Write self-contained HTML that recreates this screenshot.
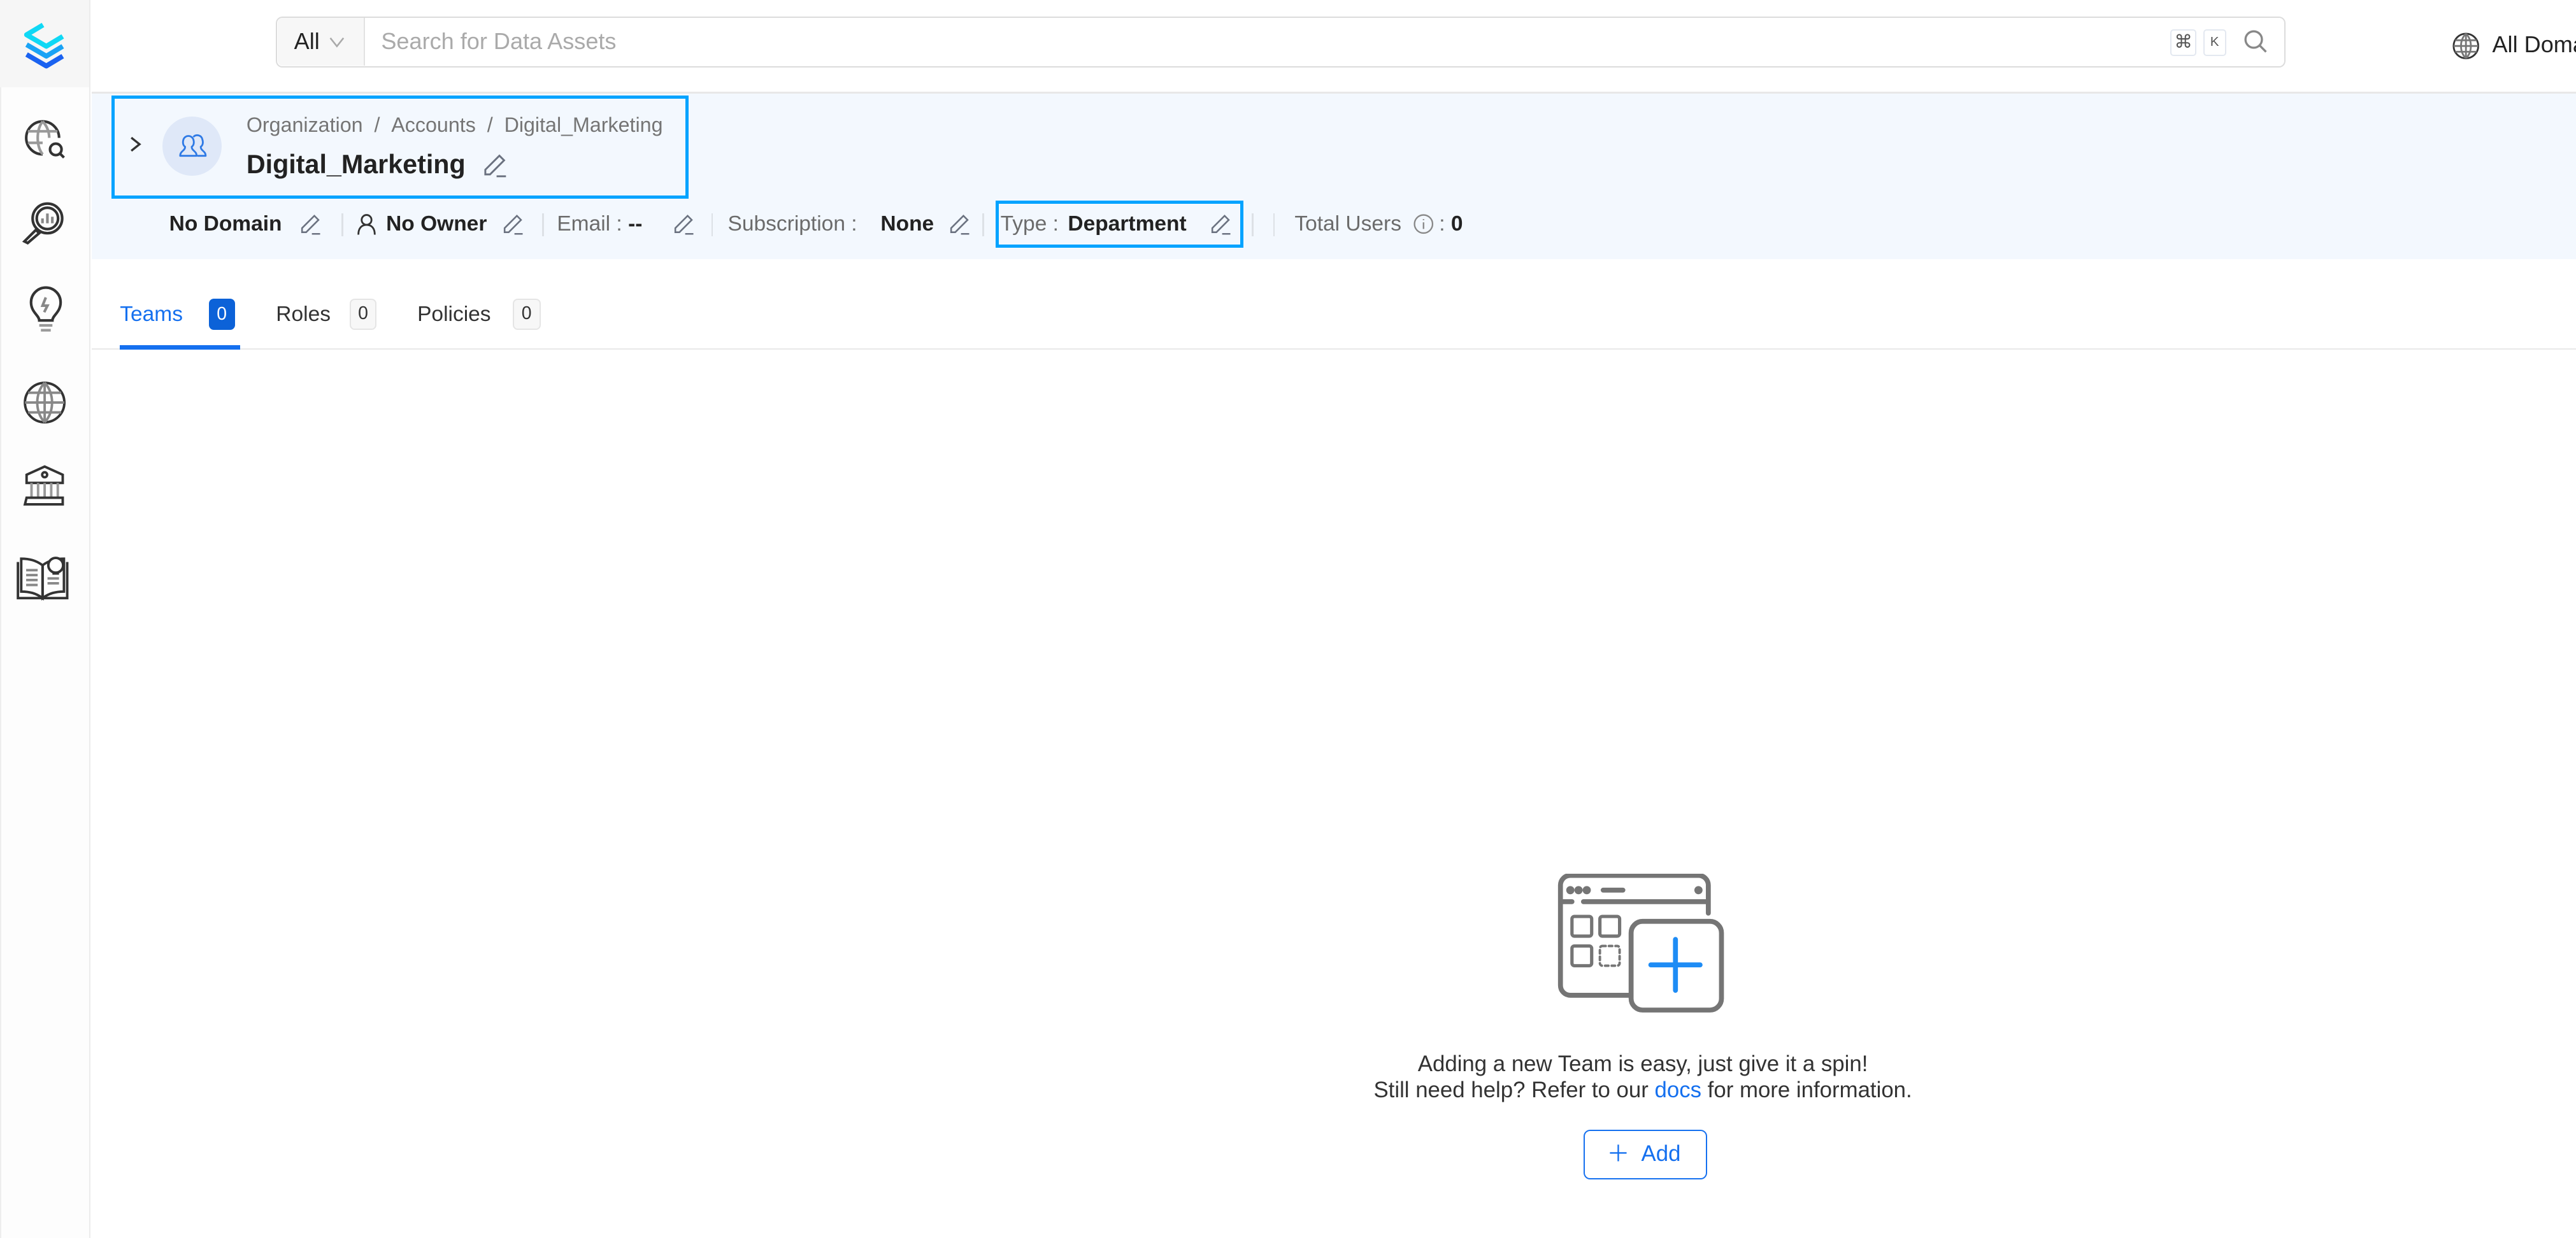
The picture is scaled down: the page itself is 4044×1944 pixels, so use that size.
<!DOCTYPE html>
<html><head><meta charset="utf-8"><style>
*{margin:0;padding:0;box-sizing:border-box}
html,body{width:4044px;height:1944px;overflow:hidden;background:#fff}
#r{zoom:2.5791;width:1568px;height:754px;position:relative;font-family:"Liberation Sans",sans-serif;color:#292929}
.a{position:absolute;white-space:nowrap}
.pen{position:absolute;width:14px;height:14px}
.sep{position:absolute;width:1px;height:14px;background:#dde1e6;top:130px}
.lbl{color:#6b6b6b}
.b{color:#222;font-weight:bold}
</style></head><body><div id="r">
<!-- sidebar -->
<div class="a" style="left:0;top:0;width:55px;height:754px;background:#fdfdfd;border-right:1px solid #ececec;border-left:1px solid #eee"></div>
<div class="a" style="left:0;top:0;width:55px;height:53px;background:#f6f6f6;border-right:1px solid #ececec"></div>
<svg class="a" style="left:13px;top:13px" width="30" height="30" viewBox="0 0 30 30" fill="none" stroke-width="3" stroke-linejoin="round">
<path d="M13 2 L3 8 L15 15 L25 9" stroke="#10d8f5"/>
<path d="M3 14 L15 21 L25 15" stroke="#1aa3f5"/>
<path d="M3 20 L15 27 L25 21" stroke="#1a62f0"/>
</svg>
<svg class="a" style="left:14px;top:71px" width="28" height="28" viewBox="0 0 28 28" fill="none" stroke="#333" stroke-width="1.6">
<path d="M22 13 A10 10 0 1 0 12 23"/><path d="M3 9h18M3 16h9M12 3c-4 5-4 15 0 20M12 3c3 3 4 7 4 10" stroke="#999"/>
<circle cx="20" cy="20" r="3.5"/><path d="M22.5 22.5l2.5 2.5"/></svg>
<svg class="a" style="left:11px;top:121px" width="30" height="30" viewBox="0 0 30 30" fill="none" stroke="#333" stroke-width="1.6">
<circle cx="18" cy="12" r="9"/><circle cx="18" cy="12" r="6.5"/><path d="M15 15v-3M18 15v-6M21 15v-4" stroke="#888"/><path d="M11 19l-7 7 2 1 7-6z"/></svg>
<svg class="a" style="left:16px;top:174px" width="24" height="30" viewBox="0 0 24 30" fill="none" stroke="#333" stroke-width="1.6">
<path d="M8 21c0-3-5-5-5-11a9 9 0 0 1 18 0c0 6-5 8-5 11z"/><path d="M12 7l-2 5h3l-2 4" stroke="#888"/><path d="M8 24h8M9 27h6" stroke="#999"/></svg>
<svg class="a" style="left:13px;top:231px" width="28" height="28" viewBox="0 0 28 28" fill="none" stroke="#333" stroke-width="1.5">
<circle cx="14" cy="14" r="12"/><path d="M2 14h24M4 8h20M4 20h20M14 2v24M14 2c-6 6-6 18 0 24M14 2c6 6 6 18 0 24" stroke="#888"/></svg>
<svg class="a" style="left:13px;top:283px" width="28" height="26" viewBox="0 0 28 26" fill="none" stroke="#333" stroke-width="1.5">
<path d="M3 11V6l11-5 11 5v5z"/><circle cx="14" cy="6" r="1.5"/><path d="M6 11v9M10 11v9M14 11v9M18 11v9M22 11v9" stroke="#999"/><path d="M3 20h22v4H2z"/></svg>
<svg class="a" style="left:9px;top:336px" width="34" height="30" viewBox="0 0 34 30" fill="none" stroke="#333" stroke-width="1.5">
<path d="M2 6v22h30V6"/><path d="M4 4c5 0 9 1 13 4v20c-4-3-8-4-13-4z"/><path d="M30 4c-5 0-9 1-13 4v20c4-3 8-4 13-4z"/>
<circle cx="25" cy="8" r="4.5" fill="#fff"/><path d="M23 13h4" /><path d="M7 11h7M7 14h7M7 17h7M7 20h7M20 16h7M20 19h7" stroke="#888"/></svg>

<!-- header -->
<div class="a" style="left:56px;top:56px;width:1512px;height:1px;background:#e8e8e8"></div>
<div class="a" style="left:168px;top:10px;width:1223px;height:31px;border:1px solid #dcdcdc;border-radius:4px"></div>
<div class="a" style="left:169px;top:11px;width:53px;height:29px;background:#f7f7f7;border-right:1px solid #e2e2e2;border-radius:3px 0 0 3px"></div>
<div class="a" style="left:179px;top:17px;font-size:14px;color:#222">All</div>
<svg class="a" style="left:200px;top:20px" width="10" height="10" viewBox="0 0 10 10" fill="none" stroke="#aaa"><path d="M1 3l4 5 4-5"/></svg>
<div class="a" style="left:232px;top:17px;font-size:14px;color:#aaa">Search for Data Assets</div>
<div class="a" style="left:1321px;top:18px;width:16px;height:16px;border:1px solid #e3e8f0;border-radius:2px;font-size:11px;color:#555;text-align:center;line-height:14px">⌘</div>
<div class="a" style="left:1341px;top:18px;width:14px;height:16px;border:1px solid #e3e8f0;border-radius:2px;font-size:8px;color:#555;text-align:center;line-height:14px">K</div>
<svg class="a" style="left:1365px;top:17px" width="16" height="16" viewBox="0 0 16 16" fill="none" stroke="#888" stroke-width="1.3"><circle cx="7" cy="7" r="5"/><path d="M10.5 10.5l4 4"/></svg>
<svg class="a" style="left:1492px;top:19px" width="18" height="18" viewBox="0 0 18 18" fill="none" stroke="#333" stroke-width="1.1"><circle cx="9" cy="9" r="7.5"/><path d="M1.5 9h15M2.5 5.5h13M2.5 12.5h13M9 1.5v15M9 1.5c-4 4-4 11 0 15M9 1.5c4 4 4 11 0 15" stroke="#777"/></svg>
<div class="a" style="left:1517px;top:19px;font-size:14px;color:#222">All Domains</div>

<!-- blue band -->
<div class="a" style="left:56px;top:57px;width:1512px;height:101px;background:#f3f8fe"></div>
<div class="a" style="left:68px;top:58px;width:351px;height:63px;border:2px solid #00a3ff"></div>
<svg class="a" style="left:78px;top:82px" width="10" height="12" viewBox="0 0 10 12" fill="none" stroke="#333" stroke-width="1.3"><path d="M2 2l5 4-5 4"/></svg>
<div class="a" style="left:99px;top:71px;width:36px;height:36px;border-radius:50%;background:#dfe8f8"></div>
<svg class="a" style="left:108px;top:80px" width="19" height="18" viewBox="0 0 19 18" fill="none" stroke="#2f7ae5" stroke-width="1.1" stroke-linejoin="round">
<path d="M1.5 15c0-3 3-3 3-5.5-1.5-1-1.5-3-1-4.5a3.2 3.2 0 0 1 6 0c0.5 1.5 0.5 3.5-1 4.5 0 2.5 3 2.5 3 5.5z"/>
<path d="M9.5 3.5a3.2 3.2 0 0 1 5.5 1.5c0.5 1.5 0.5 3.5-1 4.5 0 2.5 3 2.5 3 5.5h-5"/>
</svg>
<div class="a" style="left:150px;top:69px;font-size:12.5px;color:#757575">Organization&nbsp;&nbsp;/&nbsp;&nbsp;Accounts&nbsp;&nbsp;/&nbsp;&nbsp;Digital_Marketing</div>
<div class="a" style="left:150px;top:91px;font-size:16px;font-weight:bold;color:#222">Digital_Marketing</div>

<svg width="0" height="0" style="position:absolute"><defs><symbol id="pn" viewBox="0 0 14 14"><path d="M9.5 1.5l2.5 2.5-7.5 7.5H2v-2.5z" fill="none" stroke="#6b7280" stroke-width="1"/><path d="M8 12.5h5" stroke="#6b7280" stroke-width="1"/></symbol></defs></svg>
<svg class="pen" style="left:293px;top:93px;width:16px;height:16px"><use href="#pn"/></svg>

<div class="a b" style="left:103px;top:129px;font-size:13px">No Domain</div>
<svg class="pen" style="left:182px;top:130px"><use href="#pn"/></svg>
<div class="sep" style="left:208px"></div>
<svg class="a" style="left:217px;top:130px" width="12" height="14" viewBox="0 0 12 14" fill="none" stroke="#333" stroke-width="1.1"><circle cx="6" cy="4" r="3"/><path d="M1 13c0-4 2-6 5-6s5 2 5 6"/></svg>
<div class="a b" style="left:235px;top:129px;font-size:13px">No Owner</div>
<svg class="pen" style="left:305px;top:130px"><use href="#pn"/></svg>
<div class="sep" style="left:330px"></div>
<div class="a lbl" style="left:339px;top:129px;font-size:13px">Email : <b style="color:#222">--</b></div>
<svg class="pen" style="left:409px;top:130px"><use href="#pn"/></svg>
<div class="sep" style="left:433px"></div>
<div class="a lbl" style="left:443px;top:129px;font-size:13px">Subscription :</div>
<div class="a b" style="left:536px;top:129px;font-size:13px">None</div>
<svg class="pen" style="left:577px;top:130px"><use href="#pn"/></svg>
<div class="sep" style="left:598px"></div>
<div class="a" style="left:606px;top:122px;width:151px;height:29px;border:2px solid #00a3ff"></div>
<div class="a lbl" style="left:609px;top:129px;font-size:13px">Type :</div>
<div class="a b" style="left:650px;top:129px;font-size:13px">Department</div>
<svg class="pen" style="left:736px;top:130px"><use href="#pn"/></svg>
<div class="sep" style="left:762px"></div>
<div class="sep" style="left:775px"></div>
<div class="a lbl" style="left:788px;top:129px;font-size:13px">Total Users</div>
<svg class="a" style="left:860px;top:130px" width="13" height="13" viewBox="0 0 13 13" fill="none" stroke="#888" stroke-width="0.9"><circle cx="6.5" cy="6.5" r="5.5"/><path d="M6.5 5.5v4M6.5 3.5v0.6"/></svg>
<div class="a" style="left:876px;top:129px;font-size:13px;color:#6b6b6b">: <b style="color:#222">0</b></div>

<!-- tabs -->
<div class="a" style="left:73px;top:184px;font-size:13px;color:#1570ef">Teams</div>
<div class="a" style="left:127px;top:182px;width:16px;height:19px;background:#0c62d8;border-radius:3px;color:#fff;font-size:11px;text-align:center;line-height:19px">0</div>
<div class="a" style="left:168px;top:184px;font-size:13px;color:#333">Roles</div>
<div class="a" style="left:213px;top:182px;width:16px;height:19px;background:#f7f7f7;border:1px solid #e5e5e5;border-radius:3px;color:#333;font-size:11px;text-align:center;line-height:17px">0</div>
<div class="a" style="left:254px;top:184px;font-size:13px;color:#333">Policies</div>
<div class="a" style="left:312px;top:182px;width:17px;height:19px;background:#f7f7f7;border:1px solid #e5e5e5;border-radius:3px;color:#333;font-size:11px;text-align:center;line-height:17px">0</div>
<div class="a" style="left:56px;top:212px;width:1512px;height:1px;background:#e8e8e8"></div>
<div class="a" style="left:73px;top:210px;width:73px;height:3px;background:#1570ef"></div>

<!-- empty state -->
<svg class="a" style="left:947px;top:532px" width="104" height="86" viewBox="0 0 104 86" fill="none" stroke="#757575" stroke-width="3" stroke-linecap="round">
<path d="M46 74H9a6 6 0 0 1-6-6V7a6 6 0 0 1 6-6h78a6 6 0 0 1 6 6v17"/>
<path d="M4 17h6M17 17h75"/><path d="M29 10h12"/>
<circle cx="9" cy="10" r="1" fill="#757575"/><circle cx="14" cy="10" r="1" fill="#757575"/><circle cx="19" cy="10" r="1" fill="#757575"/><circle cx="87" cy="10" r="1" fill="#757575"/>
<rect x="10" y="26" width="12" height="12" rx="1.5" stroke-width="2"/><rect x="27" y="26" width="12" height="12" rx="1.5" stroke-width="2"/>
<rect x="10" y="44" width="12" height="12" rx="1.5" stroke-width="2"/><rect x="27" y="44" width="12" height="12" rx="1.5" stroke-width="1.5" stroke-dasharray="2 2"/>
<rect x="46" y="29" width="55" height="54" rx="7"/>
<path d="M73 40v31M58 55.5h30" stroke="#1e8cf5" stroke-width="3"/>
</svg>
<div class="a" style="left:0;width:2000px;top:640px;text-align:center;font-size:13.5px;color:#333">Adding a new Team is easy, just give it a spin!</div>
<div class="a" style="left:0;width:2000px;top:656px;text-align:center;font-size:13.5px;color:#333">Still need help? Refer to our <span style="color:#1570ef">docs</span> for more information.</div>
<div class="a" style="left:964px;top:688px;width:75px;height:30px;border:1px solid #1570ef;border-radius:4px"></div>
<svg class="a" style="left:979px;top:696px" width="12" height="12" viewBox="0 0 13 13" stroke="#1570ef" stroke-width="1"><path d="M6.5 1v11M1 6.5h11"/></svg>
<div class="a" style="left:999px;top:695px;font-size:13.5px;color:#1570ef">Add</div>
</div></body></html>
